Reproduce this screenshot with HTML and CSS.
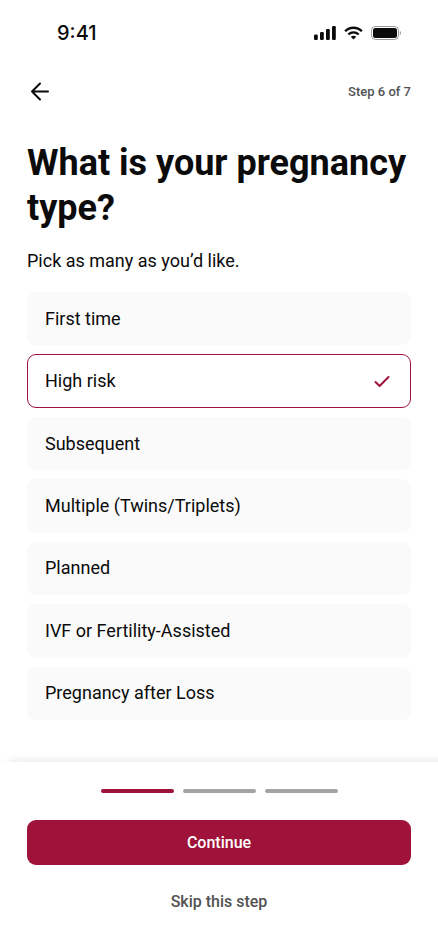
FILE: index.html
```html
<!DOCTYPE html>
<html lang="en">
<head>
  <meta charset="UTF-8" />
  <meta name="viewport" content="width=device-width, initial-scale=1">
  <title>Pregnancy type</title>
  <link rel="stylesheet" href="styles.css">
</head>
<body>

  <div class="screen">
    <div class="status-bar">
      <span class="time">9:41</span>
      <div class="status-icons">
        <svg width="22" height="14" viewBox="0 0 22 14" fill="#0b0b0b">
          <rect x="0" y="8.5" width="3.8" height="5.5" rx="1.2" />
          <rect x="6" y="6" width="3.8" height="8" rx="1.2" />
          <rect x="12" y="3" width="3.8" height="11" rx="1.2" />
          <rect x="18" y="0" width="3.8" height="14" rx="1.2" />
        </svg>
        <svg width="19" height="14" viewBox="0 0 20 14" fill="none" stroke="#0b0b0b" stroke-width="2.5">
          <path d="M1.2 5.2C6 .2 14 .2 18.8 5.2" />
          <path d="M4.6 8.6c3-3 7.8-3 10.8 0" />
          <path d="M10 13.8 7.1 11c1.6-1.5 4.2-1.5 5.8 0z" fill="#0b0b0b" stroke="none" />
        </svg>
        <svg width="30" height="14" viewBox="0 0 30 14">
          <rect x=".5" y=".5" width="27" height="13" rx="4" fill="none" stroke="#0b0b0b" stroke-opacity=".4" />
          <rect x="2" y="2" width="24" height="10" rx="2.5" fill="#0b0b0b" />
          <path d="M28.8 4.8v4.4c1.6-.8 1.6-3.6 0-4.4z" fill="#0b0b0b" fill-opacity=".4" />
        </svg>
      </div>
    </div>

    <header class="top-bar">
      <button type="button" class="back-btn" aria-label="Back">
        <svg width="26" height="26" viewBox="0 0 26 26" fill="none" stroke="#0b0b0b" stroke-width="2" stroke-linecap="round" stroke-linejoin="round">
          <path d="M21 13.5H5M13 5.5l-8 8 8 8" />
        </svg>
      </button>
      <span class="step">Step 6 of 7</span>
    </header>

    <main class="content">
      <h1>What is your pregnancy type?</h1>
      <p class="hint" id="hint">Pick as many as you’d like.</p>

      <div class="options" role="group" aria-labelledby="hint">
        <label class="option">
          <input type="checkbox" name="type" value="first">
          <span>First time</span>
        </label>
        <label class="option">
          <input type="checkbox" name="type" value="high-risk" checked>
          <span>High risk</span>
          <svg width="22" height="22" viewBox="0 0 22 22" fill="none" stroke="#9f1239" stroke-width="2" stroke-linecap="round" stroke-linejoin="round">
            <path d="M4.5 12l4.1 4 8.900-9" />
          </svg>
        </label>
        <label class="option">
          <input type="checkbox" name="type" value="subsequent">
          <span>Subsequent</span>
        </label>
        <label class="option">
          <input type="checkbox" name="type" value="multiple">
          <span>Multiple (Twins/Triplets)</span>
        </label>
        <label class="option">
          <input type="checkbox" name="type" value="planned">
          <span>Planned</span>
        </label>
        <label class="option">
          <input type="checkbox" name="type" value="ivf">
          <span>IVF or Fertility-Assisted</span>
        </label>
        <label class="option">
          <input type="checkbox" name="type" value="after-loss">
          <span>Pregnancy after Loss</span>
        </label>
      </div>
    </main>

    <footer class="actions">
      <div class="progress">
        <div class="bar active"></div>
        <div class="bar"></div>
        <div class="bar"></div>
      </div>
      <button type="button" class="continue-btn">Continue</button>
      <button type="button" class="skip-btn">Skip this step</button>
    </footer>
  </div>

</body>
</html>
```
FILE: styles.css
```css
* {
  margin: 0;
  padding: 0;
  box-sizing: border-box;
}

body {
  font-family: Roboto, sans-serif;
  color: #0b0b0b;
  background: #fff;
}

button {
  font-family: inherit;
  border: none;
  background: none;
  cursor: pointer;
}

svg {
  display: block;
}

.screen {
  min-height: 100vh;
  display: flex;
  flex-direction: column;
  overflow: hidden;
}

.status-bar {
  display: flex;
  justify-content: space-between;
  align-items: center;
  padding: 22px 37px 0 57px;
}

.time {
  font-family: Inter, sans-serif;
  font-size: 20px;
  font-weight: 500;
  line-height: 22px;
}

.status-icons {
  display: flex;
  align-items: center;
  gap: 8px;
}

.top-bar {
  display: flex;
  justify-content: space-between;
  align-items: center;
  padding: 34px 27px 0;
}

.back-btn {
  width: 26px;
  height: 26px;
}

.step {
  font-size: 13px;
  font-weight: 500;
  color: #525252;
}

.content {
  flex: 1;
  display: flex;
  flex-direction: column;
  padding: 37px 27px 42px;
}

h1 {
  font-size: 36px;
  font-weight: 700;
  line-height: 45px;
}

.hint {
  margin-top: 18px;
  font-size: 18px;
  line-height: 24px;
}

/* rows share whatever height is left above the footer */
.options {
  flex: 1;
  display: grid;
  grid-auto-rows: 1fr;
  gap: 9px;
  margin-top: 19px;
}

.option {
  position: relative;
  display: flex;
  justify-content: space-between;
  align-items: center;
  min-height: 48px;
  padding: 0 17px 1px;
  border: 1px solid #fafafa;
  border-radius: 9px;
  background: #fafafa;
  font-size: 18px;
  cursor: pointer;
}

.option input {
  position: absolute;
  opacity: 0;
}

.option:has(input:checked) {
  border-color: #9f1239;
  background: #fff;
}

.actions {
  display: flex;
  flex-direction: column;
  align-items: center;
  padding: 27px 27px 31px;
  background: #fff;
  box-shadow: 9px 0 9px rgba(0, 0, 0, 0.12);
}

.progress {
  display: flex;
  gap: 9px;
}

.bar {
  width: 73px;
  height: 4px;
  border-radius: 2px;
  background: #a3a3a3;
}

.bar.active {
  background: #9f1239;
}

.continue-btn {
  width: 100%;
  height: 45px;
  margin-top: 27px;
  border-radius: 9px;
  background: #9f1239;
  color: #fff;
  font-size: 16px;
  font-weight: 500;
}

.skip-btn {
  margin-top: 18px;
  height: 36px;
  padding: 0 18px;
  color: #525252;
  font-size: 16px;
  font-weight: 500;
}
```
